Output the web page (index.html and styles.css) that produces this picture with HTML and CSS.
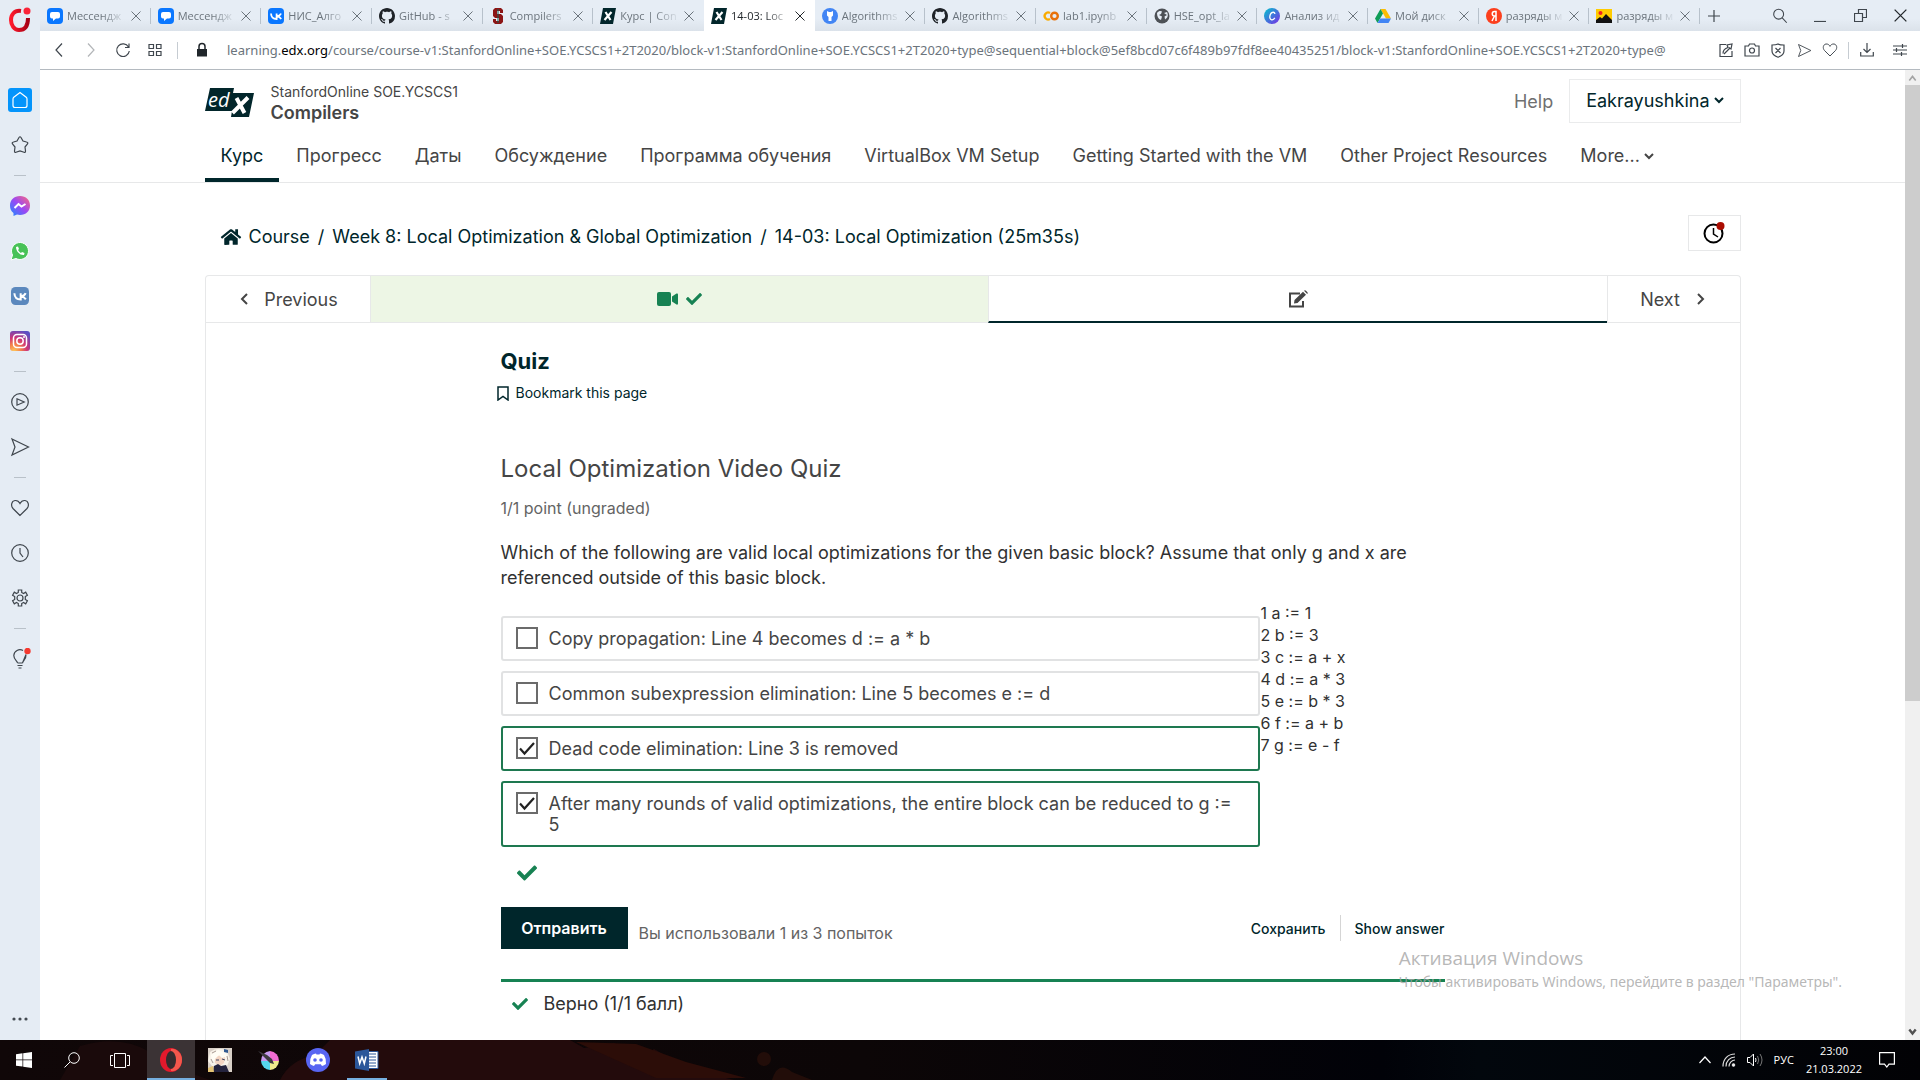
FILE: index.html
```html
<!DOCTYPE html>
<html lang="ru">
<head>
<meta charset="utf-8">
<title>14-03: Local Optimization | Compilers | edX</title>
<link rel="stylesheet" href="styles.css">
</head>
<body>
<svg class="sprite" aria-hidden="true">
  <defs>
    <linearGradient id="g-msg" x1="0" y1="1" x2="1" y2="0"><stop offset="0" stop-color="#1a8cff"/><stop offset=".5" stop-color="#9a48f5"/><stop offset="1" stop-color="#ff6a78"/></linearGradient>
    <radialGradient id="g-insta" cx=".2" cy="1" r="1.1"><stop offset="0" stop-color="#fdc75a"/><stop offset=".3" stop-color="#f5824a"/><stop offset=".6" stop-color="#cf3477"/><stop offset="1" stop-color="#5b4fc4"/></radialGradient>
    <linearGradient id="g-opera" x1="0" y1="0" x2="1" y2="0"><stop offset="0" stop-color="#ff1b2d"/><stop offset="1" stop-color="#a70014"/></linearGradient>
    <linearGradient id="g-canva" x1="0" y1="0" x2="1" y2="1"><stop offset="0" stop-color="#00c4cc"/><stop offset="1" stop-color="#7d2ae8"/></linearGradient>
  </defs>
  <symbol id="close" viewBox="0 0 10 10"><path d="M0.5 0.5l9 9M9.500 0.500l-9 9" fill="none" stroke="currentColor"/></symbol>
  <symbol id="chat" viewBox="0 0 16 16"><rect width="16" height="16" rx="4" fill="#0a77ff"/><path d="M5 4h6a2 2 0 0 1 2 2v2.500a2 2 0 0 1-2 2H9L6 13v-2.500H5a2 2 0 0 1-2-2V6a2 2 0 0 1 2-2z" fill="#fff"/></symbol>
  <symbol id="vk" viewBox="0 0 16 16"><rect width="16" height="16" rx="4" fill="currentColor"/><path d="M3 5.500C3.200 9 5 11 8.600 11V5.500M13 5.500c-.6 1.500-2 2.600-4.200 2.700C11 8.500 12.300 9.600 13.200 11" fill="none" stroke="#fff" stroke-width="1.800"/></symbol>
  <symbol id="github" viewBox="0 0 16 16"><path fill="#1f2328" d="M8 0C3.580 0 0 3.580 0 8c0 3.540 2.290 6.530 5.470 7.590.4.070.55-.17.55-.38 0-.19-.01-.82-.01-1.490-2.010.37-2.530-.49-2.690-.94-.09-.23-.48-.94-.82-1.130-.28-.15-.68-.52-.01-.53.63-.01 1.080.58 1.230.82.720 1.210 1.870.87 2.330.66.070-.52.280-.87.510-1.070-1.780-.2-3.640-.89-3.640-3.950 0-.87.310-1.590.82-2.150-.08-.2-.36-1.020.080-2.120 0 0 .67-.21 2.200.82.640-.18 1.320-.27 2-.27s1.360.09 2 .27c1.530-1.040 2.200-.82 2.200-.82.440 1.100.160 1.920.080 2.120.510.56.820 1.270.820 2.150 0 3.070-1.870 3.750-3.650 3.950.290.25.540.73.540 1.480 0 1.070-.01 1.930-.01 2.200 0 .21.150.46.550.38A8 8 0 0 0 16 8c0-4.420-3.580-8-8-8z"/></symbol>
  <symbol id="stanford" viewBox="0 0 16 16"><path d="M5 0h6l2 2v3h-3V3H7v3h4l2 2v6l-2 2H5l-2-2v-3h3v2h3v-3H5L3 8V2z" fill="#8c1515"/><path d="M8 1v14" stroke="#175e54"/></symbol>
  <symbol id="edx-tab" viewBox="0 0 16 16"><path d="M3 0h13l-3 16H0z" fill="#02262b"/><path d="M5.500 4l5 8M11.500 4l-7 8" stroke="#fff" stroke-width="2.200"/></symbol>
  <symbol id="algo" viewBox="0 0 16 16"><circle cx="8" cy="8" r="8" fill="#4285f4"/><path d="M5 3l2 1h2l2-1v4.500L9.500 9v4h-3V9L5 7.500z" fill="#fff"/></symbol>
  <symbol id="colab" viewBox="0 0 16 16"><path d="M7 5A3.500 3.500 0 1 0 7 11" fill="none" stroke="#f9ab00" stroke-width="2.400"/><circle cx="11.500" cy="8" r="3.300" fill="none" stroke="#e8710a" stroke-width="2.400"/></symbol>
  <symbol id="globe" viewBox="0 0 16 16"><circle cx="8" cy="8" r="7.500" fill="#4d5156"/><path d="M3 5c2-2.500 4-2 5-1.500L7 6 5 7l3 1.500L7 12c-3-1-4-4-4-7zM10 5l3-1c1.500 3 1 6-2 7.500l-.5-3L13 7z" fill="#e6edf5"/></symbol>
  <symbol id="canva" viewBox="0 0 16 16"><circle cx="8" cy="8" r="8" fill="url(#g-canva)"/><path d="M10.800 6c.3-2-3-2.800-4.500.5C5 10 6.500 12 8.200 11.800c1.200-.2 2-1 2.600-2" fill="none" stroke="#fff" stroke-width="1.300"/></symbol>
  <symbol id="drive" viewBox="0 0 16 16"><path d="M5.500 1h5L16 10.500h-5z" fill="#fbbc04"/><path d="M5.500 1L8 5.500 2.500 15 0 10.500z" fill="#0f9d58"/><path d="M5.200 10.500H16L13.500 15h-11z" fill="#4285f4"/></symbol>
  <symbol id="yandex" viewBox="0 0 16 16"><circle cx="8" cy="8" r="8" fill="#fc3f1d"/><path d="M10 13V3.500H8.500C5.500 3.500 5.500 8 8.500 8H10M8.500 8L6 13" fill="none" stroke="#fff" stroke-width="1.500"/></symbol>
  <symbol id="image" viewBox="0 0 16 16"><rect y="1" width="16" height="14" fill="#fc0"/><path d="M0 15v-3l4-3 2 1.500L10 6l6 6v3z" fill="#111"/><circle cx="4.500" cy="5" r="2" fill="#e22"/></symbol>
  <symbol id="search" viewBox="0 0 20 20"><circle cx="8.500" cy="8" r="5.500"/><path d="M12.500 12l5 5.500"/></symbol>
  <symbol id="heart" viewBox="0 0 20 20"><path d="M10 17.500L3 10.500C.5 7.500 1.500 3 5 2.500c2.500-.2 4 1 5 3 1-2 2.500-3.200 5-3 3.500.5 4.500 5 2 8z"/></symbol>
  <symbol id="send" viewBox="0 0 20 20"><path d="M2 2l16.500 8L2 18l3-8z"/></symbol>
  <symbol id="tick" viewBox="0 0 512 512"><path fill="currentColor" d="M173.900 439.400l-166.400-166.400c-10-10-10-26.200 0-36.200l36.200-36.200c10-10 26.200-10 36.200 0L192 312.700 432.100 72.600c10-10 26.200-10 36.200 0l36.200 36.200c10 10 10 26.200 0 36.200l-294.400 294.400c-10 10-26.200 10-36.200 0z"/></symbol>
  <symbol id="chevron" viewBox="0 0 10 10"><path d="M1 3l4 4 4-4" fill="none" stroke="currentColor" stroke-width="2"/></symbol>
</svg>

<div class="desktop">
<div class="browser">
  <aside class="rail">
    <button class="rail-logo" aria-label="Opera"><svg width="22" height="26" viewBox="0 0 22 26"><path d="M12 5C5 4 2 9 2 14s3 10 8 10 9-3 9-12" fill="none" stroke="url(#g-opera)" stroke-width="4"/><circle cx="18" cy="5" r="3.500" fill="#fa2438"/></svg></button>
    <button class="rail-item" aria-label="Start page"><span class="home"><svg class="line" width="16" height="18" viewBox="0 0 16 18"><path d="M1 8q0-1 .8-1.800L8 1.500l6.200 4.700Q15 7 15 8v6.500q0 2-2 2H3q-2 0-2-2z"/></svg></span></button>
    <button class="rail-item" aria-label="Bookmarks"><svg class="line" width="20" height="20" viewBox="0 0 20 20"><path d="M9 2.500q1-1.500 2 0l2 3.500 3.500 1q2 .5 1 2L15 12l.5 4q0 2-1.500 1.300L10 16l-4 1.300Q4.500 18 4.500 16l.5-4-2.500-3q-1-1.500 1-2L7 6z"/></svg></button>
    <hr>
    <button class="rail-item" aria-label="Messenger"><svg width="20" height="20" viewBox="0 0 20 20"><path d="M10 0c6 0 10 4 10 9.500S16 19 10 19l-3-.4L3.500 20v-3C1 15 0 12.500 0 9.500 0 4 4 0 10 0z" fill="url(#g-msg)"/><path d="M4.500 12l4-4 3 2.500 4-2.500" fill="none" stroke="#fff" stroke-width="2"/></svg></button>
    <button class="rail-item" aria-label="WhatsApp"><svg width="20" height="20" viewBox="0 0 20 20"><path d="M1 19l1.500-5A8.500 8.500 0 1 1 6 17.500z" fill="#48c257" stroke="#fff"/><path d="M6 6c0 4.500 4 8.500 8 8l.5-2-2.500-1-1 1c-1-.5-2.500-2-3-3l1-1-1-2.500z" fill="#fff"/></svg></button>
    <button class="rail-item rail-vk" aria-label="VK"><svg width="18" height="18"><use href="#vk"/></svg></button>
    <button class="rail-item" aria-label="Instagram"><svg width="20" height="20" viewBox="0 0 20 20"><rect width="20" height="20" rx="3" fill="url(#g-insta)"/><g fill="none" stroke="#fff" stroke-width="1.500"><rect x="3.500" y="3.500" width="13" height="13" rx="3.500"/><circle cx="10" cy="10" r="3.200"/></g><circle cx="14" cy="6" r="1" fill="#fff"/></svg></button>
    <hr>
    <button class="rail-item" aria-label="Player"><svg class="line" width="20" height="20" viewBox="0 0 20 20"><circle cx="10" cy="10" r="8.300"/><path d="M7 6.800l7.200 3.200L7 13.200z"/></svg></button>
    <button class="rail-item" aria-label="Flow"><svg class="line" width="20" height="20"><use href="#send"/></svg></button>
    <hr>
    <button class="rail-item" aria-label="Favourites"><svg class="line" width="20" height="20"><use href="#heart"/></svg></button>
    <button class="rail-item" aria-label="History"><svg class="line" width="20" height="20" viewBox="0 0 20 20"><circle cx="10" cy="10" r="8.300"/><path d="M10 5v5l3 4"/></svg></button>
    <button class="rail-item" aria-label="Settings"><svg class="line" width="20" height="20" viewBox="0 0 20 20"><circle cx="10" cy="10" r="3"/><path d="M8.300 2h3.400v2.500l1.800 1 2.200-1.300 1.700 3L15.300 8.500v3l2.100 1.300-1.700 3-2.200-1.300-1.800 1V18H8.300v-2.500l-1.800-1-2.200 1.300-1.700-3 2.100-1.300v-3L2.600 7.200l1.700-3 2.200 1.300 1.800-1z"/></svg></button>
    <hr>
    <button class="rail-item" aria-label="Tips"><svg class="line" width="22" height="22" viewBox="0 0 22 22"><path d="M8.500 15c0-2-3.700-3.500-3.700-7.500A6.200 6.200 0 0 1 14 2.500M17 6.500c.5 4.500-3.500 6.500-3.500 8.500zM8.500 15h5M8.500 17.500h5M9.500 20h3"/><circle cx="18.500" cy="3" r="2.600" fill="#f5392f" stroke="#f5392f"/></svg></button>
    <button class="rail-item rail-more" aria-label="More"><svg width="16" height="4" viewBox="0 0 16 4"><g fill="#444b52"><circle cx="2" cy="2" r="1.600"/><circle cx="8" cy="2" r="1.600"/><circle cx="14" cy="2" r="1.600"/></g></svg></button>
  </aside>

  <div class="window">
    <div class="tabbar">
      <div class="tabs">
        <div class="tab"><svg class="fav"><use href="#chat"/></svg><button class="tab-title">Мессендж</button><button class="x" aria-label="Close"><svg><use href="#close"/></svg></button></div>
        <div class="tab"><svg class="fav"><use href="#chat"/></svg><button class="tab-title">Мессендж</button><button class="x" aria-label="Close"><svg><use href="#close"/></svg></button></div>
        <div class="tab"><svg class="fav vk-blue"><use href="#vk"/></svg><button class="tab-title">НИС_Алго</button><button class="x" aria-label="Close"><svg><use href="#close"/></svg></button></div>
        <div class="tab"><svg class="fav"><use href="#github"/></svg><button class="tab-title">GitHub - s</button><button class="x" aria-label="Close"><svg><use href="#close"/></svg></button></div>
        <div class="tab"><svg class="fav"><use href="#stanford"/></svg><button class="tab-title">Compilers</button><button class="x" aria-label="Close"><svg><use href="#close"/></svg></button></div>
        <div class="tab last"><svg class="fav"><use href="#edx-tab"/></svg><button class="tab-title">Курс | Con</button><button class="x" aria-label="Close"><svg><use href="#close"/></svg></button></div>
        <div class="tab active last"><svg class="fav"><use href="#edx-tab"/></svg><button class="tab-title">14-03: Loc</button><button class="x" aria-label="Close"><svg><use href="#close"/></svg></button></div>
        <div class="tab"><svg class="fav"><use href="#algo"/></svg><button class="tab-title">Algorithms</button><button class="x" aria-label="Close"><svg><use href="#close"/></svg></button></div>
        <div class="tab"><svg class="fav"><use href="#github"/></svg><button class="tab-title">Algorithms</button><button class="x" aria-label="Close"><svg><use href="#close"/></svg></button></div>
        <div class="tab"><svg class="fav"><use href="#colab"/></svg><button class="tab-title">lab1.ipynb</button><button class="x" aria-label="Close"><svg><use href="#close"/></svg></button></div>
        <div class="tab"><svg class="fav"><use href="#globe"/></svg><button class="tab-title">HSE_opt_la</button><button class="x" aria-label="Close"><svg><use href="#close"/></svg></button></div>
        <div class="tab"><svg class="fav"><use href="#canva"/></svg><button class="tab-title">Анализ ид</button><button class="x" aria-label="Close"><svg><use href="#close"/></svg></button></div>
        <div class="tab"><svg class="fav"><use href="#drive"/></svg><button class="tab-title">Мой диск</button><button class="x" aria-label="Close"><svg><use href="#close"/></svg></button></div>
        <div class="tab"><svg class="fav"><use href="#yandex"/></svg><button class="tab-title">разряды м</button><button class="x" aria-label="Close"><svg><use href="#close"/></svg></button></div>
        <div class="tab"><svg class="fav"><use href="#image"/></svg><button class="tab-title">разряды м</button><button class="x" aria-label="Close"><svg><use href="#close"/></svg></button></div>
      </div>
      <button class="new-tab" aria-label="New tab"><svg class="line" width="12" height="12" viewBox="0 0 12 12"><path d="M6 0v12M0 6h12"/></svg></button>
      <div class="controls">
        <button aria-label="Search"><svg class="line" width="18" height="18"><use href="#search"/></svg></button>
        <button aria-label="Minimize"><svg class="line" width="12" height="12" viewBox="0 0 12 12"><path d="M0 11.500h12"/></svg></button>
        <button aria-label="Restore"><svg class="line" width="13" height="13" viewBox="0 0 13 13"><path d="M.5 4.500h8v8h-8zM4.500 4V.5h8v8H9"/></svg></button>
        <button aria-label="Close window"><svg class="dark" width="13" height="13"><use href="#close"/></svg></button>
      </div>
    </div>

    <div class="toolbar">
      <button class="tool" aria-label="Back"><svg class="line" width="8" height="14" viewBox="0 0 8 14"><path d="M7 .5L1 7l6 6.500"/></svg></button>
      <button class="tool faded" aria-label="Forward"><svg class="line" width="8" height="14" viewBox="0 0 8 14"><path d="M1 .5L7 7l-6 6.500"/></svg></button>
      <button class="tool" aria-label="Reload"><svg class="line" width="16" height="16" viewBox="0 0 16 16"><path d="M13.500 5A6.300 6.300 0 1 0 14.300 9M14 1.500V5.500H10"/></svg></button>
      <button class="tool" aria-label="Tabs"><svg class="line" width="14" height="14" viewBox="0 0 14 14"><path d="M1 1.500h4.500v4H1zM8.500 1.500H13v4H8.500zM1 8.500h4.500v4H1zM8.500 8.500H13v4H8.500z"/></svg></button>
      <span class="divider"></span>
      <svg class="lock" width="12" height="16" viewBox="0 0 12 16"><path d="M1 7h10v7.500H1z" fill="#20262b"/><path d="M3 7V4.500a3 3 0 0 1 6 0V7" fill="none" stroke="#20262b" stroke-width="1.500"/></svg>
      <div class="url">learning.<b>edx.org</b>/course/course-v1:StanfordOnline+SOE.YCSCS1+2T2020/block-v1:StanfordOnline+SOE.YCSCS1+2T2020+type@sequential+block@5ef8bcd07c6f489b97fdf8ee40435251/block-v1:StanfordOnline+SOE.YCSCS1+2T2020+type@</div>
      <div class="tools">
        <button aria-label="Share"><svg class="line" width="14" height="14" viewBox="0 0 14 14"><path d="M7 1.500H1v12h12V8M4 10.500c0-3 2-5 5-6L8 2l5-1-1 5-2-1.500M5 11l6-6"/></svg></button>
        <button aria-label="Snapshot"><svg class="line" width="16" height="14" viewBox="0 0 16 14"><path d="M1 3h3.500l1-2h5l1 2H15v10H1z"/><circle cx="8" cy="7.500" r="2.500"/></svg></button>
        <button aria-label="Blocker"><svg class="line" width="14" height="15" viewBox="0 0 14 15"><path d="M7 1c2 1 4 1 6 1v6c0 3-2.500 5-6 6.200C3.500 13 1 11 1 8V2c2 0 4 0 6-1zM4.500 5l5 5M9.500 5l-5 5"/></svg></button>
        <button aria-label="Send"><svg class="line" width="15" height="15"><use href="#send"/></svg></button>
        <button aria-label="Like"><svg class="line" width="16" height="16"><use href="#heart"/></svg></button>
      </div>
      <span class="divider end"></span>
      <div class="tools wide">
        <button aria-label="Downloads"><svg class="line" width="14" height="14" viewBox="0 0 14 14"><path d="M7 0v9.500M3.500 6L7 9.500 10.500 6M.7 9v4h12.600V9"/></svg></button>
        <button aria-label="Easy setup"><svg class="line" width="14" height="12" viewBox="0 0 14 12"><path d="M0 2h14M0 6h14M0 10h14M9.500 0v4M3.500 4v4M8.500 8v4"/></svg></button>
      </div>
    </div>

    <div class="viewport">
      <div class="page">
        <header class="site">
          <div class="wrap">
            <div class="brand">
              <a class="logo" href="#" aria-label="edX"><svg width="50" height="30" viewBox="0 0 50 30"><path d="M5 0h24l-1 5h21l-5 24H26l1-6H0z" fill="#02262b"/><text x="3" y="19" class="logo-ed">ed</text><path d="M31.500 10l8 15M43 9.500L27.500 25" stroke="#fff" stroke-width="4"/></svg></a>
              <div class="course"><span class="org">StanfordOnline SOE.YCSCS1</span><span class="name">Compilers</span></div>
              <a class="help" href="#">Help</a>
              <button class="user">Eakrayushkina<svg class="chev"><use href="#chevron"/></svg></button>
            </div>
            <nav class="course-nav">
              <a class="current" href="#">Курс</a><a href="#">Прогресс</a><a href="#">Даты</a><a href="#">Обсуждение</a><a href="#">Программа обучения</a><a href="#">VirtualBox VM Setup</a><a href="#">Getting Started with the VM</a><a href="#">Other Project Resources</a><a class="more" href="#">More...<svg class="chev"><use href="#chevron"/></svg></a>
            </nav>
          </div>
        </header>

        <main class="wrap content">
          <div class="crumb-row">
            <nav class="crumbs">
              <a href="#"><svg width="22" height="18" viewBox="0 0 576 512"><path fill="currentColor" d="M280 148L96 300v164c0 9 7 16 16 16l112-.3c9 0 16-7 16-16V368c0-9 7-16 16-16h64c9 0 16 7 16 16v95.600c0 9 7 16 16 16l112 .3c9 0 16-7 16-16V300L296 148c-4-4-11-4-16 0zM571 251l-83-69V44c0-7-5-12-12-12h-56c-7 0-12 5-12 12v73l-89-74c-18-14-43-14-61 0L4 251c-5 4-6 12-2 17l26 31c4 5 12 6 17 2L280 107c4-4 11-4 15 0l236 194c5 4 13 3 17-2l26-31c4-5 3-13-3-17z"/></svg>Course</a><span>/</span><a href="#">Week 8: Local Optimization &amp; Global Optimization</a><span>/</span><a href="#">14-03: Local Optimization (25m35s)</a>
            </nav>
            <button class="notify" aria-label="Notifications"><svg width="22" height="22" viewBox="0 0 22 22"><circle cx="10.500" cy="11.500" r="9" fill="none" stroke="#000" stroke-width="2"/><path d="M10.500 6v6l4.500 3" fill="none" stroke="#000" stroke-width="1.500"/><circle cx="17.500" cy="4" r="4" fill="#ab0d02"/></svg></button>
          </div>

          <section class="unit">
            <nav class="sequence">
              <button class="step prev"><svg width="8" height="12" viewBox="0 0 8 12"><path d="M7 1L2 6l5 5" fill="none" stroke="currentColor" stroke-width="2"/></svg>Previous</button>
              <button class="seq done" aria-label="Video, completed"><svg width="21" height="14" viewBox="0 0 21 14"><rect width="14" height="14" rx="2" fill="currentColor"/><path d="M15 4.500L19.500 1.500q1.500-.5 1.500 1v9q0 1.500-1.500 1L15 9.500z" fill="currentColor"/></svg><svg width="16" height="16"><use href="#tick"/></svg></button>
              <button class="seq selected" aria-label="Quiz"><svg width="20" height="18" viewBox="0 0 20 18"><path d="M12 3.500H2v13h13V11" fill="none" stroke="currentColor" stroke-width="2"/><path d="M15 1.800L18 4.800 9.500 13 6 13.500 6.500 10zM16 .8q1-1 2 0l1.200 1.200q1 1 0 2z" fill="currentColor"/></svg></button>
              <button class="step next">Next<svg width="8" height="12" viewBox="0 0 8 12"><path d="M1 1l5 5-5 5" fill="none" stroke="currentColor" stroke-width="2"/></svg></button>
            </nav>

            <div class="problem">
              <h1>Quiz</h1>
              <button class="bookmark"><svg width="12" height="15" viewBox="0 0 12 15"><path d="M1 1h10v13L6 10.500 1 14z" fill="none" stroke="currentColor" stroke-width="1.500"/></svg>Bookmark this page</button>
              <h2>Local Optimization Video Quiz</h2>
              <p class="points">1/1 point (ungraded)</p>
              <p class="question">Which of the following are valid local optimizations for the given basic block? Assume that only g and x are referenced outside of this basic block.</p>
              <div class="answer-grid">
                <div class="options">
                  <label class="option"><input type="checkbox"><span>Copy propagation: Line 4 becomes d := a * b</span></label>
                  <label class="option"><input type="checkbox"><span>Common subexpression elimination: Line 5 becomes e := d</span></label>
                  <label class="option correct"><input type="checkbox" checked><span>Dead code elimination: Line 3 is removed</span></label>
                  <label class="option correct"><input type="checkbox" checked><span>After many rounds of valid optimizations, the entire block can be reduced to g := 5</span></label>
                </div>
                <div class="code">1 a := 1<br>2 b := 3<br>3 c := a + x<br>4 d := a * 3<br>5 e := b * 3<br>6 f := a + b<br>7 g := e - f</div>
              </div>
              <svg class="status"><use href="#tick"/></svg>
              <div class="actions">
                <button class="submit">Отправить</button>
                <span class="attempts">Вы использовали 1 из 3 попыток</span>
                <button class="minor">Сохранить</button>
                <button class="minor">Show answer</button>
              </div>
              <div class="result"><svg width="16" height="16"><use href="#tick"/></svg>Верно (1/1 балл)</div>
            </div>
          </section>
        </main>
      </div>
      <div class="scrollbar"><svg width="9" height="8" viewBox="0 0 10 10"><path d="M1 8l4-5 4 5" fill="none" stroke="#a3a3a3" stroke-width="2"/></svg><span class="thumb"></span><svg width="9" height="8" viewBox="0 0 10 10"><path d="M1 2l4 5 4-5" fill="none" stroke="#505050" stroke-width="3"/></svg></div>
    </div>
  </div>
</div>

<footer class="taskbar">
  <svg class="wallpaper" viewBox="0 0 1920 40" preserveAspectRatio="none" aria-hidden="true"><path d="M60 40L80 6q40-12 70 6t60 28z" fill="#1a0a0b"/><path d="M280 40q10-20 35-25l15-15h240l14 8 30-5 14 6 8 6 10 0 8-6 14 8 26 8 20 10 20 5z" fill="#230b0c"/><path d="M576 2l60 2 50 18 60 16h-90z" fill="#2c0d08"/><circle cx="764" cy="19" r="7" fill="#220d09"/><path d="M772 40q6-20 20-8l20 8z" fill="#220d09"/></svg>
  <button aria-label="Start"><svg width="16" height="16" viewBox="0 0 16 16"><path d="M0 2.200L6.500 1.300v6.300H0zM7.200 1.200L16 0v7.600H7.200zM0 8.300h6.500v6.300L0 13.700zM7.200 8.300H16V16l-8.800-1.200z" fill="#fff"/></svg></button>
  <button aria-label="Search"><svg width="16" height="16" viewBox="0 0 16 16" fill="none" stroke="#fff"><circle cx="10" cy="6" r="5.300"/><path d="M6 10L.5 15.500"/></svg></button>
  <button aria-label="Task view"><svg width="20" height="15" viewBox="0 0 20 15" fill="none" stroke="#fff"><path d="M4.500.5h11v14h-11zM3 2.500H.5v10H3M17 2.500h2.500v10H17"/></svg></button>
  <button class="focus" aria-label="Opera"><svg width="24" height="24" viewBox="0 0 24 24"><ellipse cx="12" cy="12" rx="11" ry="12" fill="#e3192c"/><path d="M12 1c4-1 11 3 11 11s-7 12-11 11z" fill="#f4574c"/><ellipse cx="12" cy="12" rx="5" ry="9" fill="#352b2e"/></svg></button>
  <button class="task" aria-label="Game"><svg width="24" height="24" viewBox="0 0 24 24"><rect width="24" height="24" fill="#d9d0c8"/><path d="M2 4Q10-2 19 3l3 8-3 7H4L0 13z" fill="#f8f3ea"/><path d="M7 9q5-3 10 0l-1 6-4 3-5-3z" fill="#f3d5c3"/><path d="M4 15l-1-8 7-5 8 3 3 8-4-4-3 1-3-3-4 4z" fill="#fffdf5"/><path d="M5 24l1-6 4-2 3 2 5-1 3 7z" fill="#24233e"/><path d="M16 1l4 1v3l-4-1z" fill="#315b92"/><path d="M8 12h3M14 11l3 1" stroke="#414762"/><path d="M4 5l4-2M19 8l1 5M3 11l2 4" stroke="#a99b94" fill="none"/><path d="M0 20l5-2 1 6H0z" fill="#e4c374"/></svg></button>
  <button class="task" aria-label="Krita"><svg width="22" height="22" viewBox="0 0 22 22"><path d="M12 2a9.500 9.500 0 0 1 9 10l-9 0z" fill="#f26bd2"/><path d="M21 12a9.500 9.500 0 0 1-9 9v-9z" fill="#f2ea8c"/><path d="M12 21a9.500 9.500 0 0 1-9-9l9 0z" fill="#55d7ed"/><path d="M3 12a9.500 9.500 0 0 1 9-10v10z" fill="#c79af0"/><path d="M0 2l9 4 5 4 2 5-4-1-5-5z" fill="#3c3a40"/></svg></button>
  <button class="task" aria-label="Discord"><svg width="24" height="24" viewBox="0 0 24 24"><circle cx="12" cy="12" r="12" fill="#5865f2"/><path d="M6 7q2-1.500 4-1.500l.5 1h3l.5-1q2 0 4 1.500 2.500 4 2 9-2 1.500-4 2l-1.200-1.800H9.200L8 18q-2-.5-4-2-.5-5 2-9z" fill="#fff"/><circle cx="9" cy="12" r="1.800" fill="#5865f2"/><circle cx="15" cy="12" r="1.800" fill="#5865f2"/></svg></button>
  <button class="task open" aria-label="Word"><svg width="24" height="22" viewBox="0 0 24 22"><path d="M12 2.500h11v17H12z" fill="#fff" stroke="#2b579a"/><path d="M13 5h8M13 8h8M13 11h8M13 14h8M13 17h8" stroke="#2b579a"/><path d="M0 2.500L14 0v22L0 19.500z" fill="#2b579a"/><path d="M3 7.500l1.700 7L7 8l2.300 6.500 1.700-7" fill="none" stroke="#fff" stroke-width="1.500"/></svg></button>
  <div class="tray">
    <svg width="12" height="8" viewBox="0 0 12 8" fill="none" stroke="#fff" stroke-width="1.200"><path d="M.5 7L6 1l5.500 6"/></svg>
    <svg width="14" height="14" viewBox="0 0 14 14" fill="none" stroke="#ddd" stroke-width="1.200"><path d="M1 13.500C1 6 6 1 13 1M4 13.500C4 8 8 4 13 4M7 13.500C7 10 10 7 13 7"/><circle cx="11.500" cy="12" r="1.200" fill="#fff"/></svg>
    <svg width="16" height="14" viewBox="0 0 16 14" fill="none" stroke="#fff"><path d="M.5 4.500H3L6.500 1v12L3 9.500H.5zM8.500 5q1 2 0 4"/><path d="M10.500 3q2.500 4 0 8M13 1q4 6 0 12" stroke="#777"/></svg>
    <span class="lang">РУС</span>
    <time class="clock">23:00<br>21.03.2022</time>
    <svg width="16" height="16" viewBox="0 0 16 16" fill="none" stroke="#fff" stroke-width="1.200"><path d="M.6.6h14.800v11.500H10L7.800 15 5.500 12.100H.6z"/></svg>
  </div>
</footer>

<div class="watermark"><strong>Активация Windows</strong><span>Чтобы активировать Windows, перейдите в раздел "Параметры".</span></div>
</div>
</body>
</html>
```
FILE: styles.css
```css
* { box-sizing: border-box; }
body { margin: 0; font-family: Inter, "Liberation Sans", sans-serif; color: #454545; background: #fff; }
button { border: 0; background: none; padding: 0; margin: 0; font: inherit; color: inherit; display: flex; align-items: center; justify-content: center; }
a { color: inherit; text-decoration: none; }
svg { display: block; flex: none; }
.sprite { position: absolute; width: 0; height: 0; }
.line { fill: none; stroke: #3f464d; stroke-width: 1.2px; }
.dark { color: #22272b; }

.desktop { min-height: 100vh; display: flex; flex-direction: column; position: relative; }
.browser { flex: 1; display: flex; background: #e5ecf4; }
.window { flex: 1; min-width: 0; display: flex; flex-direction: column; }

/* left rail */
.rail { width: 40px; display: flex; flex-direction: column; align-items: center; padding-right: 1px; }
.rail-logo { height: 77px; width: 39px; align-items: flex-start; padding-top: 6px; }
.rail-item { width: 39px; height: 45px; }
.rail-vk { color: #5b88bd; }
.rail-more { margin-top: auto; height: 42px; }
.rail hr { width: 12px; height: 16px; margin: 0; border: 0; background: linear-gradient(#b9c1c9, #b9c1c9) center / 12px 1px no-repeat; }
.home { width: 24px; height: 24px; border-radius: 3px; background: #0494fb; display: flex; align-items: center; justify-content: center; }
.home .line { stroke: #fff; }

/* tab strip */
.tabbar { height: 31px; display: flex; background: linear-gradient(#e6edf5 60%, #dbe2ea); font: 11px/31px "Open Sans", "Noto Sans", sans-serif; }
.tabs { flex: 1; min-width: 0; display: flex; }
.tab { flex: 1 1 0; min-width: 0; display: flex; align-items: center; gap: 4px; padding: 0 7px; color: #6b747c; background: linear-gradient(#b7c1cb, #b7c1cb) right center / 1px 16px no-repeat; }
.tab.last { background: none; }
.tab.active { background: #fff; color: #22272b; }
.fav { width: 16px; height: 16px; }
.vk-blue { color: #0a77ff; }
.tab-title { flex: 1; min-width: 0; white-space: nowrap; justify-content: flex-start; -webkit-mask-image: linear-gradient(90deg, #000 60%, transparent 105%); mask-image: linear-gradient(90deg, #000 60%, transparent 105%); }
.x { width: 16px; height: 16px; }
.x svg { width: 10px; height: 10px; }
.new-tab { width: 28px; }
.controls { display: flex; margin-left: 32px; }
.controls button { width: 40px; }

/* address bar */
.toolbar { height: 39px; display: flex; align-items: center; padding: 0 7px 0 3px; background: #fff; border-bottom: 1px solid #b4bac0; }
.tool { width: 32px; height: 32px; }
.faded { opacity: .4; }
.divider { width: 1px; height: 17px; margin: 0 6px; background: #c6ccd2; }
.divider.end { margin: 0 5px; }
.lock { margin: 0 19px 0 12px; }
.url { flex: 1; min-width: 0; overflow: hidden; white-space: nowrap; font: 13px/20px "Noto Sans", "Open Sans", sans-serif; color: #6b747c; }
.url b { font-weight: 400; color: #000; }
.tools { display: flex; }
.tools button { width: 26px; height: 26px; }
.tools.wide { gap: 7px; }

/* page */
.viewport { flex: 1; display: flex; background: #fff; }
.page { flex: 1; min-width: 0; display: flex; flex-direction: column; font-size: 18px; }
.wrap { width: 100%; max-width: 1536px; margin: 0 auto; }
.site { border-bottom: 1px solid #e7e8e9; }
.brand { display: flex; align-items: center; padding-top: 8px; }
.logo { margin-right: 16px; padding-top: 4px; }
.logo-ed { font: italic 20px "Open Sans", sans-serif; fill: #fff; }
.course { display: flex; flex-direction: column; padding-top: 4px; }
.org { font-size: 14px; line-height: 20px; }
.name { font-size: 18px; line-height: 22px; font-weight: 600; }
.help { margin-left: auto; margin-right: 16px; color: #707070; }
.user { height: 44px; padding: 0 16px 2px; border: 1px solid #eaebec; color: #00262b; }
.chev { width: 10px; height: 10px; margin-left: 4px; }
.course-nav { display: flex; gap: 1px; margin-top: 6px; }
.course-nav a { padding: 12px 16px 0; height: 52px; line-height: 28px; }
.course-nav .current { color: #00262b; border-bottom: 4px solid #00262b; }
.course-nav .more { display: flex; }
.course-nav .chev { margin-top: 9px; }

.content { flex: 1; display: flex; flex-direction: column; }
.crumb-row { display: flex; justify-content: space-between; align-items: flex-start; padding: 32px 0 24px 15px; color: #00262b; }
.crumbs { display: flex; align-items: center; gap: 8px; line-height: 28px; padding-top: 8px; }
.crumbs a { display: flex; align-items: center; gap: 7px; }
.notify { width: 53px; height: 36px; border: 1px solid #e7e8e9; }
.unit { flex: 1; border: 1px solid #e7e8e9; border-bottom: 0; border-radius: 4px 4px 0 0; }
.sequence { display: flex; height: 47px; }
.step { border-bottom: 1px solid #e7e8e9; color: #454545; }
.prev { width: 165px; gap: 16px; padding-left: 3px; border-right: 1px solid #e7e8e9; }
.next { width: 133px; gap: 17px; padding-right: 2px; border-left: 1px solid #e7e8e9; }
.seq { flex: 1; gap: 8px; border-bottom: 1px solid #e7e8e9; }
.done { background: #edf6e5; color: #178253; }
.selected { border-left: 1px solid #e7e8e9; border-bottom: 2px solid #00262b; }

.problem { max-width: 944px; margin: 0 auto; padding-top: 24px; }
h1 { margin: 0; font-size: 22px; line-height: 28px; font-weight: 700; color: #00262b; }
.bookmark { gap: 7px; margin: 8px 0 0 -4px; font-size: 14px; line-height: 20px; color: #00262b; }
h2 { margin: 52px 0 0; font-size: 24px; line-height: 28px; font-weight: 400; color: #454545; }
.points { margin: 13px 0 0; font-size: 16px; line-height: 24px; color: #646464; }
.question { margin: 20px 0 0; line-height: 25px; color: #313131; }
.answer-grid { display: grid; grid-template-columns: 1fr 185px; margin-top: 10px; }
.options { display: flex; flex-direction: column; gap: 10px; padding-top: 16px; }
.option { display: flex; align-items: flex-start; gap: 11px; padding: 9px 13px; border: 2px solid #e1e2e3; border-radius: 3px; line-height: 21px; }
.option span { padding: 1px 0; }
.option.correct { border-color: #1e7850; }
.option input { appearance: none; flex: none; width: 22px; height: 22px; margin: 0; border: 2px solid #6b6b6b; background: #fff; }
.option input:checked { background: #fff url("data:image/svg+xml,%3Csvg xmlns='http://www.w3.org/2000/svg' viewBox='0 0 18 18'%3E%3Cpath d='M2 9.500l4.500 5L16 4' fill='none' stroke='%23222' stroke-width='2.200'/%3E%3C/svg%3E") center / 18px 18px no-repeat; }
.code { font-size: 16px; line-height: 22px; color: #313131; padding: 2px 0 0 1px; }
.status { width: 20px; height: 20px; margin: 16px 0 0 16px; color: #178253; }
.actions { display: flex; align-items: center; margin-top: 24px; }
.submit { width: 127px; height: 42px; background: #00262b; color: #fff; font-size: 16px; font-weight: 600; }
.attempts { margin: 9px auto 0 11px; font-size: 16px; color: #646464; }
.minor { height: 26px; padding: 0 0 0 14px; font-size: 14px; font-weight: 500; color: #00262b; }
.minor + .minor { margin-left: 14px; border-left: 1px solid #d5d5d5; }
.result { display: flex; align-items: center; gap: 16px; margin-top: 30px; padding: 10px 11px; border-top: 3px solid #178253; line-height: 24px; color: #313131; }
.result svg { color: #178253; }

.scrollbar { width: 15px; background: #f0f0f0; display: flex; flex-direction: column; align-items: center; padding: 4px 0; gap: 3px; }
.thumb { width: 15px; height: 64%; background: #cdcdcd; margin-bottom: auto; }

/* taskbar */
.taskbar { height: 40px; display: flex; align-items: stretch; position: relative; background: linear-gradient(90deg, #100708 0, #0c0607 45%, #010208 72%, #02070d 77%, #020205 100%); color: #fff; }
.taskbar > button { width: 48px; position: relative; }
.taskbar .focus { background: #3b3335; border-bottom: 2px solid #76b0e0; padding-top: 2px; margin: 0 1px 0 3px; }
.taskbar .task { width: 40px; margin: 0 5px 0 4px; }
.taskbar .open { border-bottom: 2px solid #76b0e0; padding-top: 2px; }
.wallpaper { position: absolute; inset: 0; width: 100%; height: 100%; }
.tray { margin-left: auto; display: flex; align-items: center; gap: 11px; padding-right: 25px; font: 11px/18px "Open Sans", "Noto Sans", sans-serif; }
.clock { text-align: center; padding: 0 6px 1px 1px; }
.watermark { position: absolute; right: 78px; bottom: 88px; display: flex; flex-direction: column; font: 14px/20px "Noto Sans", "Open Sans", sans-serif; color: rgba(165, 165, 165, .8); pointer-events: none; }
.watermark strong { font: 19px/28px "Open Sans", "Noto Sans", sans-serif; }
```
